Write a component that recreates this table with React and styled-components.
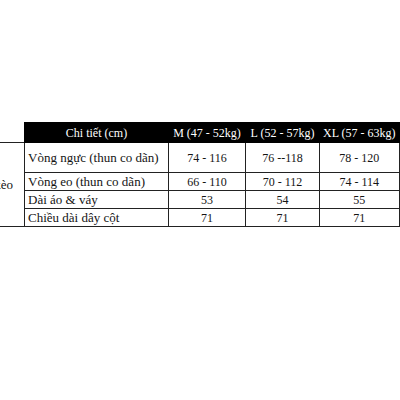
import React from "react";
import styled, { createGlobalStyle } from "styled-components";

const Global = createGlobalStyle`
  html, body {
    margin: 0;
    padding: 0;
    background: #ffffff;
  }
  body {
    font-family: "Liberation Serif", "Times New Roman", serif;
    color: #141414;
  }
`;

const Page = styled.div`
  width: 400px;
  height: 400px;
  overflow: hidden;
  padding-top: 122px;
  box-sizing: border-box;
`;

const Table = styled.table`
  border-collapse: collapse;
  margin-left: -46px;
  table-layout: fixed;
  font-size: 12px;
  line-height: 14px;
`;

const Col = styled.col`
  width: ${(p) => p.$w}px;
`;

const HeadCell = styled.th`
  background: #000000;
  color: #ffffff;
  font-weight: normal;
  height: 19px;
  padding: 0 3px;
  text-align: center;
  white-space: nowrap;
  border: 1px solid #000000;
`;

const BlankHead = styled.th`
  padding: 0;
  border: none;
`;

const GroupCell = styled.td`
  border: 1px solid #222222;
  text-align: right;
  padding-right: 11px;
  font-size: 13px;
  white-space: nowrap;
`;

const LabelCell = styled.td`
  border: 1px solid #222222;
  padding: 0 3px;
  font-size: 13px;
  height: ${(p) => (p.$tall ? "29px" : "17px")};
  white-space: nowrap;
`;

const ValueCell = styled.td`
  border: 1px solid #222222;
  text-align: center;
  white-space: nowrap;
`;

const widths = [70, 144, 77, 74, 74];

const sizes = ["M (47 - 52kg)", "L (52 - 57kg)", "XL (57 - 63kg)"];

const rows = [
  { label: "Vòng ngực (thun co dãn)", values: ["74 - 116", "76 --118", "78 - 120"], tall: true },
  { label: "Vòng eo (thun co dãn)", values: ["66 - 110", "70 - 112", "74 - 114"] },
  { label: "Dài áo & váy", values: ["53", "54", "55"] },
  { label: "Chiều dài dây cột", values: ["71", "71", "71"] },
];

export default function App() {
  return (
    <Page>
      <Global />
      <Table>
        <colgroup>
          {widths.map((w, i) => (
            <Col key={i} $w={w} />
          ))}
        </colgroup>
        <thead>
          <tr>
            <BlankHead />
            <HeadCell>Chi tiết (cm)</HeadCell>
            {sizes.map((s) => (
              <HeadCell key={s}>{s}</HeadCell>
            ))}
          </tr>
        </thead>
        <tbody>
          {rows.map((r, i) => (
            <tr key={r.label}>
              {i === 0 && <GroupCell rowSpan={4}>Dây kèo</GroupCell>}
              <LabelCell $tall={r.tall}>{r.label}</LabelCell>
              {r.values.map((v, j) => (
                <ValueCell key={j}>{v}</ValueCell>
              ))}
            </tr>
          ))}
        </tbody>
      </Table>
    </Page>
  );
}
